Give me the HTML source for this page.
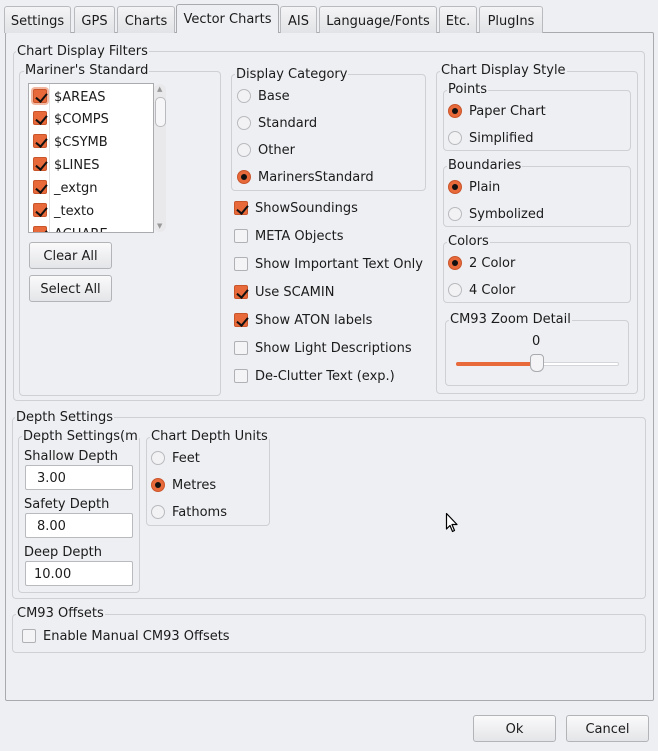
<!DOCTYPE html>
<html><head><style>
*{box-sizing:border-box;margin:0;padding:0}
body{width:658px;height:751px;background:#eeeff3;font-family:"DejaVu Sans","Liberation Sans",sans-serif;font-size:13px;color:#1b1b1b;position:relative;overflow:hidden}
.a{position:absolute;white-space:nowrap;padding-top:2px}
.box{position:absolute;border:1px solid #cfd0d4;border-radius:4px}
.tab{position:absolute;top:6px;height:27px;border:1px solid #b9babe;border-bottom:none;border-radius:3px 3px 0 0;background:linear-gradient(#f4f4f6,#e2e3e6);text-align:center;line-height:29px;font-size:13px}
.t{position:absolute;background:#eeeff3;padding:1px 1px 0;line-height:14px;white-space:nowrap}
.rb{position:absolute;width:14px;height:14px;border-radius:50%;border:1px solid #b9babe;background:#f2f2f4}
.rb.on{background:#e8693a;border-color:#c9552b}
.rb.on::after{content:"";position:absolute;left:3px;top:3px;width:6px;height:6px;border-radius:50%;background:#111}
.cb{position:absolute;width:14px;height:14px;border-radius:2px;border:1px solid #b0b1b5;background:#f4f4f6}
.cb.on{background:#e8693a;border-color:#c9552b}
.cb.on::after{content:"";position:absolute;left:2px;top:1px;width:9px;height:5px;border-left:2px solid #111;border-bottom:2px solid #111;transform:rotate(-50deg);transform-origin:50% 50%;margin-top:2px}
.btn{position:absolute;height:27px;border:1px solid #b3b4b8;border-radius:3px;background:linear-gradient(#fafafb,#e4e5e8);text-align:center;line-height:27px}
.inp{position:absolute;left:25px;width:108px;height:25px;background:#fff;border:1px solid #b9babe;border-radius:2px;padding-left:11px;line-height:25px}
</style></head><body>
<div class="a" style="left:5px;top:32px;width:649px;height:669px;border:1px solid #a9aaae;border-radius:2px;padding:0"></div>
<div class="tab" style="left:4px;width:67px">Settings</div>
<div class="tab" style="left:74px;width:41px">GPS</div>
<div class="tab" style="left:117px;width:58px">Charts</div>
<div class="tab" style="left:176px;width:103px;top:4px;height:29px;background:#eeeff3;border-color:#a9aaae">Vector Charts</div>
<div class="tab" style="left:280px;width:37px">AIS</div>
<div class="tab" style="left:319px;width:118px">Language/Fonts</div>
<div class="tab" style="left:439px;width:38px">Etc.</div>
<div class="tab" style="left:479px;width:64px">PlugIns</div>

<div class="box" style="left:13px;top:51px;width:632px;height:350px"></div>
<div class="t" style="left:16px;top:44px">Chart Display Filters</div>
<div class="box" style="left:19px;top:71px;width:202px;height:325px"></div>
<div class="t" style="left:24px;top:63px">Mariner's Standard</div>
<div class="a" style="left:28px;top:83px;width:126px;height:150px;background:#fff;border:1px solid #aaabaf;overflow:hidden;padding:0">
<div class="a" style="left:20px;top:0;width:1px;height:150px;background:#e2e2e4;padding:0"></div>
<div class="cb on" style="left:4px;top:5px;box-shadow:0 0 0 2px #f2b7a0"></div><div class="a" style="left:25px;top:4px">$AREAS</div>
<div class="cb on" style="left:4px;top:27px"></div><div class="a" style="left:25px;top:26px">$COMPS</div>
<div class="cb on" style="left:4px;top:50px"></div><div class="a" style="left:25px;top:49px">$CSYMB</div>
<div class="cb on" style="left:4px;top:73px"></div><div class="a" style="left:25px;top:72px">$LINES</div>
<div class="cb on" style="left:4px;top:96px"></div><div class="a" style="left:25px;top:95px">_extgn</div>
<div class="cb on" style="left:4px;top:119px"></div><div class="a" style="left:25px;top:118px">_texto</div>
<div class="cb on" style="left:4px;top:142px"></div><div class="a" style="left:25px;top:141px">ACHARE</div>
</div>
<div class="a" style="left:154px;top:84px;width:12px;height:148px;background:#e9e9ec;border-radius:6px;padding:0"></div>
<div class="a" style="left:157px;top:85px;font-size:7px;color:#999;padding:0">▲</div>
<div class="a" style="left:157px;top:222px;font-size:7px;color:#999;padding:0">▼</div>
<div class="a" style="left:155px;top:97px;width:11px;height:30px;background:#f6f6f8;border:1px solid #b9babe;border-radius:5px;padding:0"></div>
<div class="btn" style="left:29px;top:242px;width:83px">Clear All</div>
<div class="btn" style="left:29px;top:275px;width:83px">Select All</div>

<div class="box" style="left:231px;top:74px;width:195px;height:117px"></div>
<div class="t" style="left:235px;top:67px">Display Category</div>
<div class="rb" style="left:237px;top:89px"></div><div class="a" style="left:258px;top:87px">Base</div>
<div class="rb" style="left:237px;top:116px"></div><div class="a" style="left:258px;top:114px">Standard</div>
<div class="rb" style="left:237px;top:143px"></div><div class="a" style="left:258px;top:141px">Other</div>
<div class="rb on" style="left:237px;top:170px"></div><div class="a" style="left:258px;top:168px">MarinersStandard</div>
<div class="cb on" style="left:234px;top:201px"></div><div class="a" style="left:255px;top:199px">ShowSoundings</div>
<div class="cb" style="left:234px;top:229px"></div><div class="a" style="left:255px;top:227px">META Objects</div>
<div class="cb" style="left:234px;top:257px"></div><div class="a" style="left:255px;top:255px">Show Important Text Only</div>
<div class="cb on" style="left:234px;top:285px"></div><div class="a" style="left:255px;top:283px">Use SCAMIN</div>
<div class="cb on" style="left:234px;top:313px"></div><div class="a" style="left:255px;top:311px">Show ATON labels</div>
<div class="cb" style="left:234px;top:341px"></div><div class="a" style="left:255px;top:339px">Show Light Descriptions</div>
<div class="cb" style="left:234px;top:369px"></div><div class="a" style="left:255px;top:367px">De-Clutter Text (exp.)</div>

<div class="box" style="left:436px;top:71px;width:202px;height:323px"></div>
<div class="t" style="left:440px;top:63px">Chart Display Style</div>
<div class="box" style="left:443px;top:90px;width:188px;height:61px"></div>
<div class="t" style="left:447px;top:82px">Points</div>
<div class="rb on" style="left:448px;top:104px"></div><div class="a" style="left:469px;top:102px">Paper Chart</div>
<div class="rb" style="left:448px;top:131px"></div><div class="a" style="left:469px;top:129px">Simplified</div>
<div class="box" style="left:443px;top:166px;width:188px;height:61px"></div>
<div class="t" style="left:447px;top:158px">Boundaries</div>
<div class="rb on" style="left:448px;top:180px"></div><div class="a" style="left:469px;top:178px">Plain</div>
<div class="rb" style="left:448px;top:207px"></div><div class="a" style="left:469px;top:205px">Symbolized</div>
<div class="box" style="left:443px;top:242px;width:188px;height:61px"></div>
<div class="t" style="left:447px;top:234px">Colors</div>
<div class="rb on" style="left:448px;top:256px"></div><div class="a" style="left:469px;top:254px">2 Color</div>
<div class="rb" style="left:448px;top:283px"></div><div class="a" style="left:469px;top:281px">4 Color</div>
<div class="box" style="left:445px;top:320px;width:184px;height:66px"></div>
<div class="t" style="left:449px;top:312px">CM93 Zoom Detail</div>
<div class="a" style="left:532px;top:332px">0</div>
<div class="a" style="left:456px;top:362px;width:163px;height:4px;background:#fff;border:1px solid #d4d5d8;border-radius:2px;padding:0"></div>
<div class="a" style="left:456px;top:362px;width:80px;height:4px;background:#e8693a;border-radius:2px;padding:0"></div>
<div class="a" style="left:530px;top:354px;width:14px;height:18px;background:#f4f4f6;border:1px solid #a9aaae;border-radius:4px 4px 6px 6px;padding:0"></div>

<div class="box" style="left:12px;top:417px;width:634px;height:182px"></div>
<div class="t" style="left:15px;top:410px">Depth Settings</div>
<div class="box" style="left:18px;top:436px;width:122px;height:157px"></div>
<div class="t" style="left:22px;top:429px">Depth Settings(m</div>
<div class="a" style="left:24px;top:447px">Shallow Depth</div>
<div class="inp" style="top:465px">3.00</div>
<div class="a" style="left:24px;top:495px">Safety Depth</div>
<div class="inp" style="top:513px">8.00</div>
<div class="a" style="left:24px;top:543px">Deep Depth</div>
<div class="inp" style="top:561px;padding-left:8px">10.00</div>
<div class="box" style="left:146px;top:437px;width:124px;height:89px"></div>
<div class="t" style="left:150px;top:429px">Chart Depth Units</div>
<div class="rb" style="left:151px;top:451px"></div><div class="a" style="left:172px;top:449px">Feet</div>
<div class="rb on" style="left:151px;top:478px"></div><div class="a" style="left:172px;top:476px">Metres</div>
<div class="rb" style="left:151px;top:505px"></div><div class="a" style="left:172px;top:503px">Fathoms</div>
<svg style="position:absolute;left:445px;top:512px" width="14" height="22" viewBox="0 0 14 22"><path d="M1.5 1.5 L1.5 17 L5 13.5 L7.5 19.5 L9.5 18.5 L7 12.5 L12 12.5 Z" fill="#fff" stroke="#000" stroke-width="1.2" stroke-linejoin="round"/></svg>

<div class="box" style="left:12px;top:614px;width:634px;height:39px"></div>
<div class="t" style="left:16px;top:606px">CM93 Offsets</div>
<div class="cb" style="left:22px;top:629px"></div><div class="a" style="left:43px;top:627px">Enable Manual CM93 Offsets</div>

<div class="btn" style="left:473px;top:715px;width:83px">Ok</div>
<div class="btn" style="left:566px;top:715px;width:83px">Cancel</div>
</body></html>
